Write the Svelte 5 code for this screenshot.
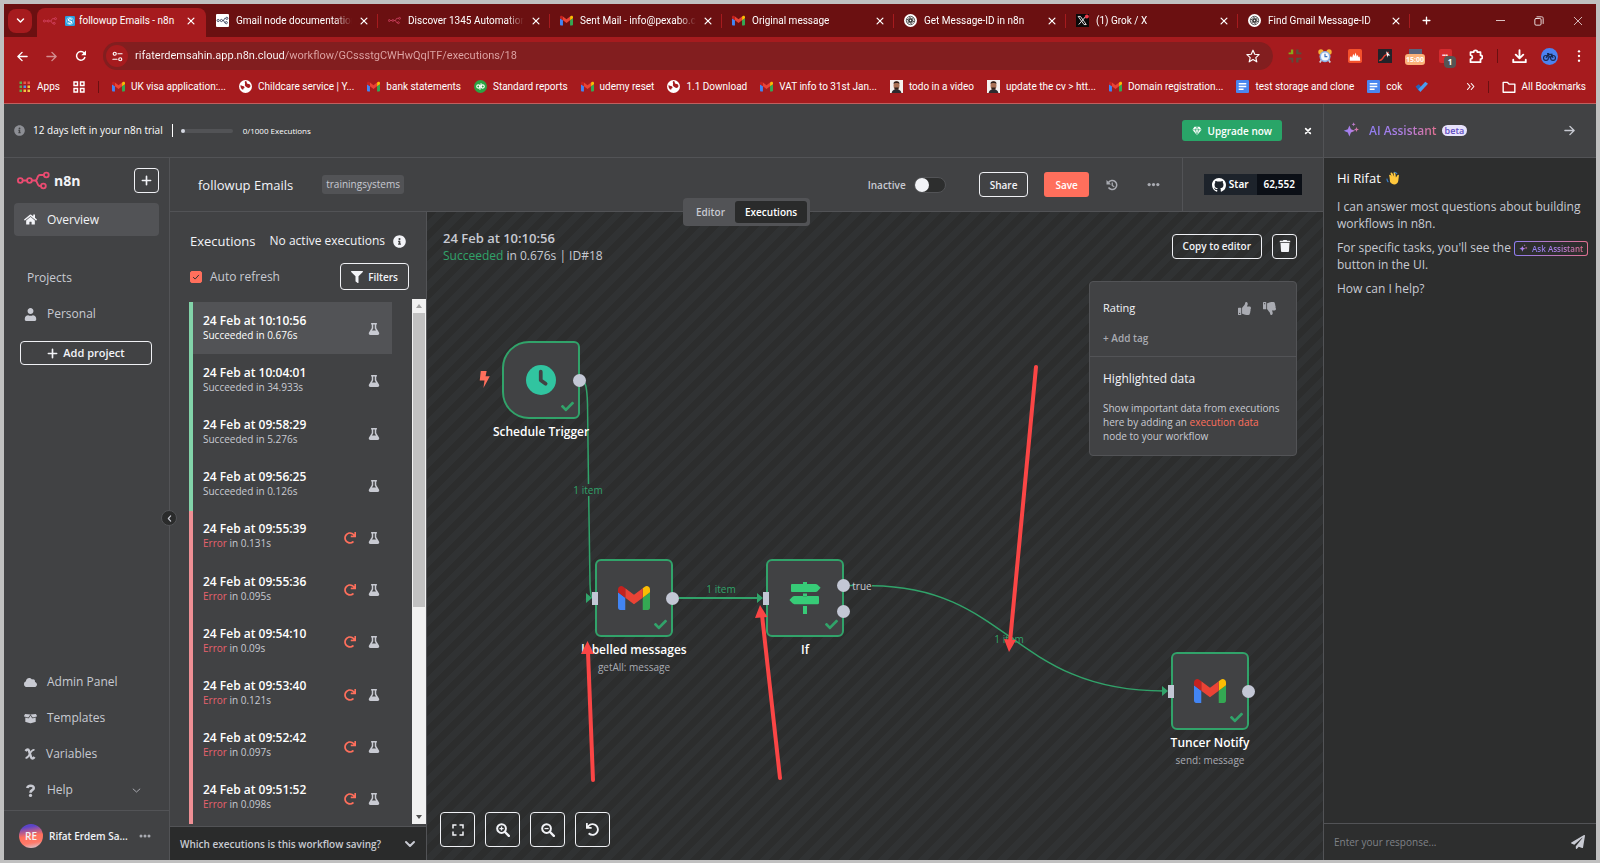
<script>
  const gmail =
    '<path fill="#4285f4" d="M58 108h14V74L52 59v43c0 3.3 2.7 6 6 6"/><path fill="#34a853" d="M120 108h14c3.3 0 6-2.7 6-6V59l-20 15"/><path fill="#fbbc04" d="M120 48v26l20-15v-8c0-7.4-8.5-11.6-14.4-7.2"/><path fill="#ea4335" d="M72 74V48l24 18 24-18v26L96 92"/><path fill="#c5221f" d="M52 51v8l20 15V48l-5.6-4.2c-5.9-4.4-14.4-.2-14.4 7.2"/>';
  const n8nMark =
    '<g fill="none" stroke="currentColor" stroke-width="5"><circle cx="9" cy="28" r="6.5"/><circle cx="34" cy="28" r="6.5"/><circle cx="80" cy="13" r="6.5"/><circle cx="72" cy="43" r="6.5"/><path d="M15.500 28h12M40.500 28h9c8 0 4-15 13-15h11M49 28c8 0 5 15 13 15h4"/></g>';
  const redo =
    '<path fill="currentColor" d="M500.330 0h-47.410a12 12 0 0 0-12 12.570l4 82.760A247.420 247.420 0 0 0 256 8C119.340 8 7.900 119.530 8 256.190 8.100 393.070 119.100 504 256 504a247.100 247.100 0 0 0 166.180-63.910 12 12 0 0 0 .480-17.430l-34-34a12 12 0 0 0-16.380-.550A176 176 0 1 1 402.100 157.800l-101.530-4.870a12 12 0 0 0-12.570 12v47.410a12 12 0 0 0 12 12h200.330a12 12 0 0 0 12-12V12a12 12 0 0 0-12-12z"/>';
  const thumb =
    '<path fill="currentColor" fill-rule="evenodd" d="M104 224H24c-13 0-24 11-24 24v240c0 13 11 24 24 24h80c13 0 24-11 24-24V248c0-13-11-24-24-24zM64 472c-13 0-24-11-24-24s11-24 24-24 24 11 24 24-11 24-24 24zM384 81c0 43-26 67-33 95h101c34 0 60 28 60 58 0 18-8 37-20 49 10 24 8 57-9 80 8 26 0 58-17 75 5 17 3 32-6 44-20 30-70 30-113 30h-3c-48 0-88-18-120-32-16-7-37-16-52-16-7 0-12-5-12-12V238c0-3 1-6 4-8 39-39 56-81 89-113 15-15 20-38 25-59C283 39 292 0 312 0c24 0 72 8 72 81z"/>';
  const sparkle =
    '<path fill="url(#ai)" d="M9 5l2.200 5.300L17 12.500l-5.800 2.200L9 20.500l-2.200-5.800L1 12.500l5.800-2.200zM19 7l1 2.500 2.500 1-2.500 1-1 2.500-1-2.500-2.500-1 2.500-1zM15 .500l.800 2 2 .800-2 .800-.800 2-.800-2-2-.800 2-.800z"/>';
  const stroke = (w, body) =>
    `<g fill="none" stroke="currentColor" stroke-width="${w}" stroke-linecap="round" stroke-linejoin="round">${body}</g>`;
  const petal = [0, 60, 120, 180, 240, 300].map((a) => `<path d="M9.400 5.500l5 2.900v5.400" transform="rotate(${a} 12 12)"/>`).join('');
  const spiral =
    `<circle cx="12" cy="12" r="12" fill="#fff"/><g fill="none" stroke="#222" stroke-width="1.300"><circle cx="12" cy="12" r="2.600"/>${petal}<circle cx="12" cy="12" r="7.800"/></g>`;
  const dots = (vertical) =>
    [4, 12, 20].map((p) => (vertical ? `<circle cx="12" cy="${p}" r="2" fill="currentColor"/>` : `<circle cx="${p}" cy="12" r="3" fill="currentColor"/>`)).join('');

  const icons = {
    gmail: ['52 42 88 66', gmail],
    n8n: ['0 0 90 56', n8nMark],
    n8nTile: ['0 0 24 24', '<rect width="24" height="24" rx="2" fill="#fff"/><g fill="none" stroke="#333a55" stroke-width="1.600"><circle cx="4" cy="12" r="2"/><circle cx="10" cy="12" r="2"/><circle cx="20" cy="8" r="2"/><circle cx="19" cy="16" r="2"/><path d="M12 12h2l2-4h2M14 12l2 4h1"/></g>'],
    sync: ['0 0 24 24', '<rect width="24" height="24" rx="3" fill="#2a9fe0"/><path d="M16.500 8.500C14 5 7.500 6.500 8 10c.500 3 7.500 1.500 8 4.500.400 3-6 4.500-8.500 1.500" fill="none" stroke="#fff" stroke-width="2.600"/><circle cx="12" cy="12" r="8.500" fill="none" stroke="#fff" stroke-width="1.200"/>'],
    gpt: ['0 0 24 24', spiral],
    x: ['0 0 24 24', '<rect width="24" height="24" fill="#090909"/><path d="M4 4.500h4.200L19 19.500h-4.200zM18 4.500L5 19.500" fill="none" stroke="#eee" stroke-width="1.700"/><circle cx="20" cy="4.500" r="3.600" fill="#f23b4c"/>'],
    close: ['0 0 24 24', stroke(3, '<path d="M5 5l14 14M19 5L5 19"/>')],
    dismiss: ['0 0 24 24', stroke(5, '<path d="M5 5l14 14M19 5L5 19"/>')],
    thinClose: ['0 0 24 24', stroke(1.7, '<path d="M3 3l18 18M21 3L3 21"/>')],
    plus: ['0 0 24 24', stroke(3.6, '<path d="M12 3v18M3 12h18"/>')],
    down: ['0 0 24 24', stroke(4, '<path d="M4 8l8 8 8-8"/>')],
    downThin: ['0 0 24 24', stroke(2, '<path d="M3 8l9 8 9-8"/>')],
    left: ['0 0 24 24', stroke(4, '<path d="M16 3l-8 9 8 9"/>')],
    min: ['0 0 24 24', stroke(2, '<path d="M1 12h22"/>')],
    restore: ['0 0 24 24', stroke(2, '<rect x="2" y="6" width="15" height="16" rx="3"/><path d="M7 2h11c3 0 4 1 4 4v12"/>')],
    back: ['0 0 24 24', stroke(3, '<path d="M22 12H3M11 3l-9 9 9 9"/>')],
    forward: ['0 0 24 24', stroke(3, '<path d="M2 12h19M13 3l9 9-9 9"/>')],
    reload: ['0 0 24 24', '<path d="M20 14a8.600 8.600 0 1 1-1.500-7.500" fill="none" stroke="currentColor" stroke-width="3"/><path d="M22 1v9.500h-9.500z" fill="currentColor"/>'],
    tune: ['0 0 24 24', stroke(2.6, '<circle cx="6" cy="6" r="3.300"/><path d="M13 6h9M2 18h9"/><circle cx="18" cy="18" r="3.300"/>')],
    star: ['0 0 24 24', '<path d="M12 2l3 7 7.500.700-5.700 5 1.700 7.300-6.500-3.900L5.500 22l1.700-7.300-5.700-5L9 9z" fill="none" stroke="currentColor" stroke-width="2" stroke-linejoin="round"/>'],
    cross: ['0 0 24 24', '<path fill="#86a81a" d="M5 1h4v8H1V6h4z"/><path fill="#5a4d3c" d="M14 1h4v5h5v3h-9zM1 15h8v8H6v-5H1zM14 15h9v3h-5v5h-4z"/>'],
    alarm: ['0 0 24 24', '<circle cx="5" cy="5" r="4.500" fill="#f5b335"/><circle cx="19" cy="5" r="4.500" fill="#f5b335"/><path d="M6 19l-3 4M18 19l3 4" stroke="#cfd5de" stroke-width="3"/><circle cx="12" cy="13" r="9.500" fill="#8db4e8"/><circle cx="12" cy="13" r="6.800" fill="#f6f9fc"/><path d="M12 8v5h4" fill="none" stroke="#3b6fc0" stroke-width="2"/>'],
    fire: ['0 0 24 24', '<rect width="24" height="24" rx="3" fill="#f4512c"/><path d="M3 20v-5l2-3 2 3 2-7 2 4 2-6 2 7 2-3 1 4 2-1 1 7z" fill="#fff"/>'],
    chartTile: ['0 0 24 24', '<rect width="24" height="24" rx="1" fill="#222329"/><path d="M2 20c6 0 7-7 10-9 3-1 3-2 6-6" fill="none" stroke="#e54232" stroke-width="2.400"/><path d="M14 4l7 7h-4l-1 4z" fill="#fff"/>'],
    puzzle: ['0 0 24 24', stroke(2.8, '<path d="M4 5h5c0-4 6-4 6 0h5v5c4 0 4 6 0 6v5H4v-5c4-.500 4-5.500 0-6z"/>')],
    download: ['0 0 24 24', stroke(3, '<path d="M12 2v12M6 9l6 6 6-6M2 17v4h20v-4"/>')],
    bike: ['0 0 24 24', '<circle cx="12" cy="12" r="12" fill="#4c82f0"/><g fill="none" stroke="#17284f" stroke-width="1.600"><circle cx="7" cy="14" r="3.400"/><circle cx="17" cy="14" r="3.400"/><path d="M7 14l3-5h5l2 5M10 9l3 5 3-6M8.500 8h3"/></g>'],
    kebab: ['0 0 24 24', dots(true)],
    ellipsis: ['0 0 24 24', dots(false)],
    apps: ['0 0 24 24', '<path fill="#5cae4a" d="M1 1h5v5H1zM1 9h5v5H1z"/><path fill="#e8584a" d="M9 1h5v5H9zM17 1h5v5h-5z"/><path fill="#5b8def" d="M9 9h5v5H9z"/><path fill="#f4c542" d="M17 9h5v5h-5zM17 17h5v5h-5zM9 17h5v5H9z"/><path fill="#5cae4a" d="M1 17h5v5H1z"/>'],
    grid: ['0 0 24 24', '<g fill="none" stroke="currentColor" stroke-width="2.800"><path d="M2 2h7v7H2zM15 2h7v7h-7zM2 15h7v7H2zM15 15h7v7h-7z"/></g>'],
    globe: ['0 0 24 24', '<circle cx="12" cy="12" r="12" fill="#fff"/><path d="M3 9c3 3 6 1 7 4s-3 2-2 5c-4-1-6-5-5-9zM12 2c4 1 1 4 4 5s4 0 5 3-3 6-6 4-5-3-4-6-2-4 1-6z" fill="#a61b1e"/>'],
    qb: ['0 0 24 24', '<circle cx="12" cy="12" r="12" fill="#2ca343"/><g fill="none" stroke="#fff" stroke-width="2"><circle cx="8" cy="12" r="3"/><path d="M11 9v9"/><circle cx="16" cy="12" r="3"/><path d="M13 6v9"/></g>'],
    face: ['0 0 24 24', '<rect width="24" height="24" fill="#f4f1ee"/><path d="M3 24c1-6 6-7 9-7s8 1 9 7z" fill="#2c2a2e"/><ellipse cx="12" cy="10" rx="5.500" ry="7.500" fill="#a87255"/><path d="M6.500 7c0-6 11-6 11 0-2-2-9-2-11 0zM8 14h8l-1 4H9z" fill="#2f211b"/>'],
    doc: ['0 0 24 24', '<rect width="24" height="24" rx="2" fill="#4a86ef"/><path d="M5 7h14M5 12h14M5 17h9" stroke="#fff" stroke-width="2.600"/>'],
    tick: ['0 0 24 24', '<path d="M1 12l6-4 4 4-3 9z" fill="#2463b8"/><path d="M6 17L19 3l5 4L10 22z" fill="#4a9df0"/>'],
    more: ['0 0 24 24', stroke(3, '<path d="M4 4l7 8-7 8M14 4l7 8-7 8"/>')],
    folder: ['0 0 24 24', stroke(2.4, '<path d="M2 4h7l3 3h10v14H2z"/>')],
    info: ['0 0 512 512', '<path fill="currentColor" d="M256 8C119 8 8 119 8 256s111 248 248 248 248-111 248-248S393 8 256 8zm0 110a42 42 0 1 1 0 84 42 42 0 0 1 0-84zm56 254c0 7-5 12-12 12h-88c-7 0-12-5-12-12v-24c0-7 5-12 12-12h12v-64h-12c-7 0-12-5-12-12v-24c0-7 5-12 12-12h64c7 0 12 5 12 12v100h12c7 0 12 5 12 12v24z"/>'],
    home: ['0 0 576 512', '<path fill="currentColor" d="M280.370 148.260L96 300.110V464a16 16 0 0 0 16 16l112.060-.290a16 16 0 0 0 15.920-16V368a16 16 0 0 1 16-16h64a16 16 0 0 1 16 16v95.640a16 16 0 0 0 16 16.050L464 480a16 16 0 0 0 16-16V300L295.670 148.260a12.190 12.190 0 0 0-15.300 0zM571.600 251.470L488 182.560V44.050a12 12 0 0 0-12-12h-56a12 12 0 0 0-12 12v72.610L318.470 43a48 48 0 0 0-61 0L4.340 251.470a12 12 0 0 0-1.600 16.900l25.500 31A12 12 0 0 0 45.150 301l235.220-193.740a12.190 12.190 0 0 1 15.300 0L530.900 301a12 12 0 0 0 16.900-1.600l25.500-31a12 12 0 0 0-1.700-16.930z"/>'],
    user: ['0 0 448 512', '<path fill="currentColor" d="M224 240c66 0 116-54 116-120S290 0 224 0 108 54 108 120s50 120 116 120zm90 42c-28 14-56 20-90 20s-62-6-90-20C60 282 0 342 0 416v48c0 27 22 48 48 48h352c27 0 48-21 48-48v-48c0-74-60-134-134-134z"/>'],
    cloud: ['0 0 640 512', '<path fill="currentColor" d="M537.600 226.600c4.100-10.700 6.400-22.400 6.400-34.600 0-53-43-96-96-96-19.700 0-38.100 6-53.300 16.200C367 64.200 315.300 32 256 32c-88.400 0-160 71.600-160 160 0 2.700.100 5.400.200 8.100C40.200 219.800 0 273.200 0 336c0 79.500 64.500 144 144 144h368c70.700 0 128-57.300 128-128 0-61.900-44-113.600-102.400-125.400z"/>'],
    box: ['0 0 640 512', '<path fill="currentColor" d="M53 32L0 132c-5 9 0 20 10 23l187 53c10 3 20-1 25-10L320 64zM587 32l53 100c5 9 0 20-10 23l-187 53c-10 3-20-1-25-10L320 64zM64 205v197c0 15 10 27 24 31l216 54c10 2 21 2 31 0l217-54c14-4 24-16 24-31V205l-130 37c-24 7-49-3-61-24l-65-108-64 108c-12 21-38 31-61 24z"/>'],
    variable: ['0 0 24 24', '<path d="M3 6c3-4 6-4 7 0l4 12c1 4 4 4 7 0" fill="none" stroke="currentColor" stroke-width="5"/><path d="M21 4c-5-1-8 5-10 9s-4 7-8 7" fill="none" stroke="currentColor" stroke-width="3.400"/>'],
    help: ['0 0 24 24', '<path d="M6 7.500C7 2 18 1.500 18 7.500c0 4.500-6 3.500-6 8.500" fill="none" stroke="currentColor" stroke-width="4.800"/><circle cx="12" cy="21" r="3" fill="currentColor"/>'],
    filter: ['0 0 512 512', '<path fill="currentColor" d="M488 0H24C3 0-8 26 7 41l185 185v206c0 8 4 15 10 20l80 56c16 11 38 0 38-20V226L505 41c15-15 4-41-17-41z"/>'],
    flask: ['0 0 448 512', '<path fill="currentColor" fill-rule="evenodd" d="M437.200 403.500L320 215V64h8c13.300 0 24-10.700 24-24V24c0-13.300-10.700-24-24-24H120c-13.300 0-24 10.700-24 24v16c0 13.300 10.700 24 24 24h8v151L10.800 403.500C-18.500 450.600 15.300 512 70.900 512h306.200c55.700 0 89.400-61.500 60.100-108.500zM137.900 320l48.200-77.600c3.700-5.200 5.800-11.600 5.800-18.400V64h64v160c0 6.900 2.200 13.200 5.800 18.400l48.200 77.600h-172z"/>'],
    redo: ['0 0 512 512', redo],
    undo: ['0 0 512 512', `<g transform="matrix(-1 0 0 1 512 0)">${redo}</g>`],
    history: ['0 0 24 24', '<path d="M5 7a9 9 0 1 1 0 10" fill="none" stroke="currentColor" stroke-width="3"/><path d="M1 2v9h9z" fill="currentColor"/><path d="M12.500 7v6l4 2.500" fill="none" stroke="currentColor" stroke-width="2.600"/>'],
    gem: ['0 0 24 24', '<path d="M6 2h12l5 7-11 13L1 9z" fill="currentColor"/><path d="M1 9h22M8 9l4 12 4-12-4-7z" fill="none" stroke="#29a568" stroke-width="1.500"/>'],
    github: ['0 0 16 16', '<path fill="currentColor" d="M8 0C3.580 0 0 3.580 0 8c0 3.540 2.290 6.530 5.470 7.590.400.070.550-.170.550-.380 0-.190-.010-.820-.010-1.490-2.010.370-2.530-.490-2.690-.940-.090-.230-.480-.940-.820-1.130-.280-.150-.680-.520-.010-.530.630-.010 1.080.580 1.230.820.720 1.210 1.870.870 2.330.660.070-.520.280-.870.510-1.070-1.780-.200-3.640-.890-3.640-3.950 0-.870.310-1.590.820-2.150-.080-.200-.360-1.020.080-2.120 0 0 .670-.210 2.200.820.640-.180 1.320-.270 2-.270s1.360.090 2 .270c1.530-1.040 2.200-.820 2.200-.820.440 1.100.160 1.920.080 2.120.510.560.820 1.270.820 2.150 0 3.070-1.870 3.750-3.650 3.950.290.250.540.730.540 1.480 0 1.070-.010 1.930-.010 2.200 0 .210.150.460.550.380A8.010 8.010 0 0 0 16 8c0-4.420-3.580-8-8-8z"/>'],
    trash: ['0 0 448 512', '<path fill="currentColor" d="M432 32H312l-10-19c-4-8-12-13-21-13H167c-9 0-17 5-21 13l-10 19H16C7 32 0 39 0 48v48h448V48c0-9-7-16-16-16zM32 128l21 339c2 25 23 45 48 45h246c25 0 46-20 48-45l21-339z"/>'],
    up: ['0 0 512 512', thumb],
    dislike: ['0 0 512 512', `<g transform="matrix(1 0 0 -1 0 512)">${thumb}</g>`],
    plane: ['0 0 512 512', '<path fill="currentColor" d="M476 3L12 271c-18 10-15 35 3 43l106 44 287-253c6-5 14 3 9 9L176 407v80c0 24 28 33 42 16l64-77 125 52c14 6 30-3 33-18L512 28c3-20-19-35-36-25z"/>'],
    sparkle: ['0 0 24 24', sparkle],
    fit: ['0 0 24 24', '<path d="M2 9V2h7M15 2h7v7M22 15v7h-7M9 22H2v-7" fill="none" stroke="currentColor" stroke-width="3"/>'],
    zoomIn: ['0 0 24 24', '<circle cx="9.500" cy="9.500" r="7.500" fill="none" stroke="currentColor" stroke-width="3.400"/><path d="M15 15l7 7" stroke="currentColor" stroke-width="4" stroke-linecap="round"/><path d="M9.500 6v7M6 9.500h7" stroke="currentColor" stroke-width="2.200"/>'],
    zoomOut: ['0 0 24 24', '<circle cx="9.500" cy="9.500" r="7.500" fill="none" stroke="currentColor" stroke-width="3.400"/><path d="M15 15l7 7" stroke="currentColor" stroke-width="4" stroke-linecap="round"/><path d="M6 9.500h7" stroke="currentColor" stroke-width="2.200"/>'],
    clock: ['0 0 24 24', '<circle cx="12" cy="12" r="12" fill="#31c4a0"/><path d="M11.800 5.300v6.900l3.900 2.800" fill="none" stroke="#414244" stroke-width="3" stroke-linecap="round" stroke-linejoin="round"/>'],
    signs: ['0 0 24 24', '<g fill="#37cb77"><path d="M10.500 0h3v2h-3zM2.500 1.500H20c.600 0 1 .200 1.400.600l2.300 2.300-2.300 2.500c-.400.400-.800.600-1.400.600H2.500c-.700 0-1-.400-1-1V2.500c0-.600.300-1 1-1zM10.500 8.700h3v2h-3zM21.500 10.500H4c-.600 0-1 .200-1.400.600L.300 13.500l2.300 2.500c.400.400.800.600 1.400.600h17.500c.700 0 1-.400 1-1v-4.100c0-.600-.300-1-1-1zM10.500 18h3v6h-3z"/></g>'],
    check: ['0 0 512 512', '<path fill="currentColor" d="M174 439L7 273c-10-10-10-26 0-36l37-36c10-10 26-10 36 0l112 112L432 73c10-10 26-10 36 0l37 36c10 10 10 26 0 36L210 439c-10 10-26 10-36 0z"/>'],
    bolt: ['0 0 20 32', '<path fill="currentColor" d="M3 0h11l-2 10h8L8 32l2-14H1z"/>'],
    wave: ['0 0 24 24', '<path d="M6 10c-2-4 1-5 3-2l1 2-2-5c-1-3 2-3 3-1l3 6-1-6c0-3 2-3 3 0l1 7 2-3c1-2 4-2 3 1l-1 8c-1 7-10 8-14 2z" fill="#ffc83d"/><path d="M14 2c3 0 4 1 5 3M2 13c-1 3 0 4 2 6" fill="none" stroke="#3a86d6" stroke-width="1.800"/>'],
  };

  const tabs = [
    { icon: 'n8nTile', title: 'Gmail node documentation' },
    { icon: 'n8n', title: 'Discover 1345 Automation', tint: true },
    { icon: 'gmail', title: 'Sent Mail - info@pexabo.c' },
    { icon: 'gmail', title: 'Original message' },
    { icon: 'gpt', title: 'Get Message-ID in n8n' },
    { icon: 'x', title: '(1) Grok / X' },
    { icon: 'gpt', title: 'Find Gmail Message-ID' },
  ];
  const bookmarks = [
    ['gmail', 'UK visa application:...'],
    ['globe', 'Childcare service | Y...'],
    ['gmail', 'bank statements'],
    ['qb', 'Standard reports'],
    ['gmail', 'udemy reset'],
    ['globe', '1.1 Download'],
    ['gmail', 'VAT info to 31st Jan...'],
    ['face', 'todo in a video'],
    ['face', 'update the cv > htt...'],
    ['gmail', 'Domain registration...'],
    ['doc', 'test storage and clone'],
    ['doc', 'cok'],
    ['tick', ''],
  ];
  const runs = [
    ['10:10:56', '0.676s', true],
    ['10:04:01', '34.933s', true],
    ['09:58:29', '5.276s', true],
    ['09:56:25', '0.126s', true],
    ['09:55:39', '0.131s', false],
    ['09:55:36', '0.095s', false],
    ['09:54:10', '0.09s', false],
    ['09:53:40', '0.121s', false],
    ['09:52:42', '0.097s', false],
    ['09:51:52', '0.098s', false],
  ];
  const nodes = [
    { x: 75, y: 129, name: 'Schedule Trigger', icon: 'clock', size: 30, trigger: true },
    { x: 168, y: 347, name: 'labelled messages', sub: 'getAll: message', icon: 'gmail', size: 32 },
    { x: 339, y: 347, name: 'If', icon: 'signs', size: 32 },
    { x: 744, y: 440, name: 'Tuncer Notify', sub: 'send: message', icon: 'gmail', size: 32 },
  ];
  let auto = $state(true);
  let active = $state(false);
  let reply = $state('');
  let address = $state('rifaterdemsahin.app.n8n.cloud/workflow/GCssstgCWHwQqITF/executions/18');
</script>

{#snippet icon(name, size = 12)}
  <svg class="icon" viewBox={icons[name][0]} width={size} height={size} aria-hidden="true">{@html icons[name][1]}</svg>
{/snippet}

<svg class="defs" width="0" height="0" aria-hidden="true">
  <linearGradient id="ai" x1="0" x2="1"><stop offset="0" stop-color="#8f7df0" /><stop offset="0.5" stop-color="#b180e8" /><stop offset="1" stop-color="#e0708f" /></linearGradient>
</svg>

<div class="window">
  <header class="browser">
    <div class="strip">
      <button class="tabsearch" aria-label="Search tabs">{@render icon('down', 9)}</button>
      <div class="tab current">
        <span class="tint">{@render icon('n8n', 14)}</span>
        <span class="lead">{@render icon('sync', 10)}</span>
        <span class="tabtitle">followup Emails - n8n</span>
        <button class="bare" aria-label="Close tab">{@render icon('close', 10)}</button>
      </div>
      {#each tabs as t}
        <div class="tab">
          <span class:tint={t.tint}>{@render icon(t.icon, 13)}</span>
          <span class="tabtitle">{t.title}</span>
          <button class="bare" aria-label="Close tab">{@render icon('close', 10)}</button>
        </div>
      {/each}
      <button class="bare newtab" aria-label="New tab">{@render icon('plus', 9)}</button>
      <div class="winctl">
        <button class="bare" aria-label="Minimise">{@render icon('min', 9)}</button>
        <button class="bare" aria-label="Restore">{@render icon('restore', 10)}</button>
        <button class="bare" aria-label="Close window">{@render icon('thinClose', 10)}</button>
      </div>
    </div>
    <div class="toolbar">
      <nav class="navbtns">
        <button class="bare" aria-label="Back">{@render icon('back', 11)}</button>
        <button class="bare faded" aria-label="Forward">{@render icon('forward', 11)}</button>
        <button class="bare" aria-label="Reload">{@render icon('reload', 12)}</button>
      </nav>
      <div class="address">
        <button class="tune" aria-label="Site information">{@render icon('tune', 11)}</button>
        <input aria-label="Address" bind:value={address} />
        <button class="bare" aria-label="Bookmark">{@render icon('star', 14)}</button>
      </div>
      <div class="exts">
        <button class="bare" aria-label="Extension">{@render icon('cross', 14)}</button>
        <button class="bare" aria-label="Alarm">{@render icon('alarm', 14)}</button>
        <button class="bare" aria-label="Hotjar">{@render icon('fire', 14)}</button>
        <button class="bare" aria-label="Draw">{@render icon('chartTile', 14)}</button>
        <button class="bare timer"><i></i><span>15:00</span></button>
        <button class="bare pass"><i>•••</i><span>1</span></button>
        <button class="bare" aria-label="Extensions">{@render icon('puzzle', 15)}</button>
      </div>
      <div class="account">
        <button class="bare" aria-label="Downloads">{@render icon('download', 15)}</button>
        <button class="bare" aria-label="Profile">{@render icon('bike', 17)}</button>
        <button class="bare" aria-label="Menu">{@render icon('kebab', 14)}</button>
      </div>
    </div>
    <nav class="bookmarks">
      <button class="bm">{@render icon('apps', 12)}Apps</button>
      <button class="bm" aria-label="Tab groups">{@render icon('grid', 12)}</button>
      <span class="rule"></span>
      <div class="bmlist">
        {#each bookmarks as [ic, label]}
          <button class="bm" aria-label={label || 'To do'}>{@render icon(ic, 13)}{label}</button>
        {/each}
      </div>
      <button class="bare" aria-label="More bookmarks">{@render icon('more', 9)}</button>
      <span class="rule"></span>
      <button class="bm">{@render icon('folder', 14)}All Bookmarks</button>
    </nav>
  </header>

  <div class="app">
    <section class="work">
      <div class="banner">
        <span class="muted">{@render icon('info', 11)}</span>
        <span class="trial">12 days left in your n8n trial</span>
        <span class="meter"><i></i></span>
        <small>0/1000 Executions</small>
        <button class="upgrade">{@render icon('gem', 10)}Upgrade now</button>
        <button class="bare" aria-label="Dismiss">{@render icon('dismiss', 8)}</button>
      </div>
      <div class="body">
        <aside class="side">
          <div class="brand">
            <span class="mark">{@render icon('n8n', 33)}</span><b>n8n</b>
            <button class="outline square" aria-label="Create">{@render icon('plus', 11)}</button>
          </div>
          <a class="item on" href="#overview">{@render icon('home', 13)}Overview</a>
          <h3>Projects</h3>
          <a class="item" href="#personal">{@render icon('user', 13)}Personal</a>
          <button class="outline addproject">{@render icon('plus', 11)}Add project</button>
          <div class="foot">
            <a class="item" href="#admin">{@render icon('cloud', 13)}Admin Panel</a>
            <a class="item" href="#templates">{@render icon('box', 13)}Templates</a>
            <a class="item" href="#variables">{@render icon('variable', 12)}Variables</a>
            <a class="item" href="#help">{@render icon('help', 13)}Help<span class="chev">{@render icon('downThin', 9)}</span></a>
          </div>
          <div class="me">
            <span class="avatar">RE</span><span>Rifat Erdem Sa...</span>
            <button class="bare" aria-label="Account menu">{@render icon('ellipsis', 12)}</button>
          </div>
          <button class="fold" aria-label="Collapse sidebar">{@render icon('left', 7)}</button>
        </aside>

        <div class="main">
          <div class="wfhead">
            <h1>followup Emails</h1>
            <span class="tag">trainingsystems</span>
            <div class="actions">
              <label class="switch"><span>Inactive</span><input type="checkbox" bind:checked={active} /></label>
              <button class="outline">Share</button>
              <button class="save">Save</button>
              <button class="bare hist" aria-label="History">{@render icon('history', 12)}</button>
              <button class="bare" aria-label="Options">{@render icon('ellipsis', 13)}</button>
            </div>
            <div class="gh"><a href="#star">{@render icon('github', 14)}Star</a><a class="count" href="#gazers">62,552</a></div>
            <div class="switcher"><button>Editor</button><button class="sel">Executions</button></div>
          </div>

          <div class="split">
            <section class="runs">
              <div class="rhead"><h2>Executions</h2><span>No active executions</span>{@render icon('info', 13)}</div>
              <div class="rtools">
                <label><input type="checkbox" bind:checked={auto} />Auto refresh</label>
                <button class="outline">{@render icon('filter', 12)}Filters</button>
              </div>
              <div class="scroller">
                <ul>
                  {#each runs as [time, took, ok], i}
                    <li class:bad={!ok} class:chosen={i === 0}>
                      <a href="#run{i}">
                        <span class="rtext"><b>24 Feb at {time}</b><small>{#if ok}Succeeded in {took}{:else}<em>Error</em> in {took}{/if}</small></span>
                        {#if !ok}<span class="retry">{@render icon('redo', 12)}</span>{/if}
                        {@render icon('flask', 12)}
                      </a>
                    </li>
                  {/each}
                </ul>
                <div class="bar" aria-hidden="true"><i class="upar"></i><span></span><i class="dnar"></i></div>
              </div>
              <button class="saving">Which executions is this workflow saving?{@render icon('down', 12)}</button>
            </section>

            <section class="canvas">
              <svg class="edges" width="896" height="648" aria-hidden="true">
                <g fill="none" stroke="#31a36a" stroke-width="1.500">
                  <path d="M153 168c6 0 7 8 7.500 24L161.500 272M161.700 284L163 372q.300 10 2 14" />
                  <path d="M252 386H334" stroke-width="2" />
                  <path d="M423 373.500h4M445 373.800C582 375 586 479 737 479" />
                </g>
                <path d="M159 381l6 5-6 5zM330 381l6 5-6 5zM735 474l6 5-6 5z" fill="#31a36a" />
              </svg>
              <div class="dhead">
                <div><h2>24 Feb at 10:10:56</h2><p><em>Succeeded</em> in 0.676s | ID#18</p></div>
                <button class="outline">Copy to editor</button>
                <button class="outline square" aria-label="Delete">{@render icon('trash', 12)}</button>
              </div>

              {#each nodes as n}
                <div class="node" style="left:{n.x}px;top:{n.y}px">
                  <div class="tile" class:trigger={n.trigger}>
                    {@render icon(n.icon, n.size)}
                    <span class="ok">{@render icon('check', 13)}</span>
                    {#if n.trigger}<span class="bolt">{@render icon('bolt', 17)}</span>{:else}<i class="in"></i>{/if}
                    <span class="outs"><i></i>{#if n.name === 'If'}<i></i>{/if}</span>
                  </div>
                  <strong>{n.name}</strong>
                  {#if n.sub}<small>{n.sub}</small>{/if}
                </div>
              {/each}
              <span class="count1" style="left:161px;top:278px">1 item</span>
              <span class="count1" style="left:294px;top:377px">1 item</span>
              <span class="count1" style="left:582px;top:427px">1 item</span>
              <span class="count1 true" style="left:435px;top:374px">true</span>

              <svg class="edges notes" width="896" height="648" aria-hidden="true">
                <g stroke="#fa4545" stroke-width="4" stroke-linecap="round">
                  <path d="M166 568L161 440M353 566L335 403M609 155L583 430" />
                </g>
                <path d="M160.500 429l6.500 13h-13zM333 393l7.500 12-12.500 1zM582 440l-5-13 12 1z" fill="#fa4545" />
              </svg>

              <aside class="rating">
                <div class="rate">
                  <div class="rrow"><span>Rating</span><button class="bare" aria-label="Good">{@render icon('up', 13)}</button><button class="bare" aria-label="Bad">{@render icon('dislike', 13)}</button></div>
                  <button class="bare addtag">+ Add tag</button>
                </div>
                <div class="hl">
                  <h3>Highlighted data</h3>
                  <p>Show important data from executions here by adding an <a href="#data">execution data</a> node to your workflow</p>
                </div>
              </aside>

              <div class="zoomers">
                <button class="outline" aria-label="Fit">{@render icon('fit', 12)}</button>
                <button class="outline" aria-label="Zoom in">{@render icon('zoomIn', 14)}</button>
                <button class="outline" aria-label="Zoom out">{@render icon('zoomOut', 14)}</button>
                <button class="outline" aria-label="Reset zoom">{@render icon('undo', 13)}</button>
              </div>
            </section>
          </div>
        </div>
      </div>
    </section>

    <aside class="assist">
      <div class="ahead">
        {@render icon('sparkle', 17)}<b>AI Assistant</b><span class="beta">beta</span>
        <button class="bare" aria-label="Close assistant">{@render icon('forward', 11)}</button>
      </div>
      <div class="chat">
        <h2>Hi Rifat {@render icon('wave', 14)}</h2>
        <p>I can answer most questions about building workflows in n8n.</p>
        <p>For specific tasks, you'll see the <span class="ask">{@render icon('sparkle', 9)}<b>Ask Assistant</b></span> button in the UI.</p>
        <p>How can I help?</p>
      </div>
      <div class="compose">
        <input aria-label="Message" placeholder="Enter your response..." bind:value={reply} />
        <button class="bare" aria-label="Send">{@render icon('plane', 14)}</button>
      </div>
    </aside>
  </div>
</div>

<style>
  :global(body) { margin: 0; background: #c0c0c0; }
  :global(*) { box-sizing: border-box; }
  .window { height: 100vh; padding: 4px 4px 3px; display: flex; flex-direction: column; font: 12px/16px "Open Sans", sans-serif; color: #c8cad2; background: #c0c0c0; }
  .defs { position: absolute; }
  .icon { display: block; flex: none; }
  button, input { font: inherit; color: inherit; margin: 0; }
  button { cursor: pointer; }
  a { color: inherit; text-decoration: none; }
  h1, h2, h3, p, ul { margin: 0; padding: 0; font-weight: 400; }
  .bare { background: none; border: 0; padding: 0; display: flex; align-items: center; justify-content: center; flex: none; }

  .browser { background: #a61b1e; color: #fff; font-family: Roboto, sans-serif; border-bottom: 1px solid #c0605f; }
  .strip { height: 33px; background: #6b1011; display: flex; align-items: center; padding: 0 13px 0 4px; font-size: 10px; }
  .tabsearch { width: 24px; height: 24px; border: 0; border-radius: 8px; background: #a61b1e; display: grid; place-items: center; padding: 0; margin-right: 5px; flex: none; }
  .tab { display: flex; align-items: center; gap: 7px; flex: 0 1 172px; min-width: 0; height: 14px; padding: 0 8px 0 10px; border-right: 1px solid #a61b1e; }
  .tab.current { flex-basis: 169px; height: 29px; background: #a61b1e; border-radius: 8px 8px 0 0; align-self: flex-end; padding: 0 10px 4px 6px; border: 0; gap: 4px; }
  .tabtitle { flex: 1; overflow: hidden; white-space: nowrap; mask-image: linear-gradient(90deg, #000 85%, transparent); }
  .tab.current .tabtitle { mask-image: none; }
  .lead { margin-left: 4px; }
  .tint { color: #d9486a; }
  .newtab { margin-left: 12px; }
  .winctl { margin-left: auto; display: flex; gap: 29px; }
  .toolbar { display: flex; align-items: center; height: 38px; padding: 0 10px 0 13px; }
  .navbtns { display: flex; gap: 18px; width: 86px; }
  .faded { opacity: .5; }
  .address { flex: 1; height: 28px; border-radius: 14px; background: #821e1f; display: flex; align-items: center; padding: 0 13px 0 3px; gap: 7px; }
  .tune { width: 22px; height: 22px; border-radius: 11px; border: 0; background: #a61b1e; display: grid; place-items: center; padding: 0; }
  .address input { flex: 1; border: 0; outline: 0; padding: 0; font-size: 11px; color: transparent; background: linear-gradient(90deg, #fff 150px, #e0a8a8 150px); background-clip: text; -webkit-background-clip: text; }
  .exts { display: flex; gap: 16px; padding: 0 14px 0 15px; align-items: center; border-right: 1px solid #6b1011; height: 14px; }
  .timer, .pass { position: relative; width: 14px; height: 14px; }
  .timer i { width: 13px; height: 6px; background: #59647c; align-self: flex-start; }
  .timer span { position: absolute; top: 5px; left: -3px; background: #fbb27a; border-radius: 3px; font: 700 7px/11px "Open Sans", sans-serif; padding: 0 1px; }
  .pass i { width: 13px; height: 14px; background: #d42a2e; border-radius: 2px; font: 700 5px/12px "Open Sans", sans-serif; }
  .pass span { position: absolute; left: 6px; top: 7px; width: 12px; background: #555; border-radius: 4px; font: 700 8px/12px "Open Sans", sans-serif; }
  .account { display: flex; gap: 14px; align-items: center; padding-left: 14px; }
  .bookmarks { display: flex; align-items: center; gap: 13px; height: 28px; padding: 0 10px 5px 15px; font-size: 10px; }
  .bm { display: flex; align-items: center; gap: 6px; background: none; border: 0; padding: 0; white-space: nowrap; flex: none; }
  .bmlist { flex: 1; display: flex; gap: 13px; min-width: 0; }
  .rule { width: 1px; height: 12px; background: #6b1011; }

  .app { flex: 1; min-height: 0; display: flex; background: #414244; }
  .work { flex: 1; min-width: 0; display: flex; flex-direction: column; }
  .banner { display: flex; align-items: center; height: 54px; padding: 0 11px 0 10px; border-bottom: 1px solid #525356; color: #fff; font-size: 10px; }
  .muted { color: #8d8f95; margin-right: 8px; }
  .trial { padding-right: 9px; border-right: 1px solid #fff; line-height: 13px; }
  .meter { width: 52px; height: 4px; border-radius: 2px; background: #525356; margin: 0 10px 0 8px; }
  .meter i { display: block; width: 4px; height: 4px; border-radius: 2px; background: #d5d8e2; }
  small { font-size: 10px; }
  .banner small { font-size: 8px; }
  .upgrade { margin: 0 22px 0 auto; height: 21px; border: 0; border-radius: 3px; padding: 0 10px; background: #29a568; font-weight: 600; display: flex; align-items: center; gap: 5px; }
  .body { flex: 1; min-height: 0; display: flex; }
  .side { position: relative; width: 166px; flex: none; border-right: 1px solid #525356; display: flex; flex-direction: column; }
  .brand { display: flex; align-items: center; height: 45px; padding: 0 10px 0 13px; gap: 4px; color: #f2f3f7; }
  .brand b { font-size: 14px; }
  .mark { color: #ea4b71; }
  .brand .outline { margin-left: auto; }
  .outline { border: 1px solid #f0f1f5; background: none; border-radius: 4px; height: 25px; padding: 0 10px; font-size: 10px; font-weight: 600; color: #f2f3f7; display: flex; align-items: center; justify-content: center; gap: 5px; flex: none; }
  .outline.square { width: 25px; padding: 0; }
  .item { display: flex; align-items: center; gap: 10px; height: 32px; margin: 0 10px; padding: 0 10px; border-radius: 4px; color: #c8cad2; }
  .item.on { background: #525356; color: #f2f3f7; height: 33px; }
  .side h3 { font-size: 12px; margin: 34px 0 12px 23px; }
  .addproject { margin: 11px 17px 11px 16px; height: 24px; font-size: 11px; }
  .foot { margin-top: auto; display: grid; gap: 4px; padding-bottom: 4px; }
  .chev { margin-left: auto; margin-right: 8px; }
  .me { height: 50px; border-top: 1px solid #525356; display: flex; align-items: center; gap: 6px; padding: 0 18px 0 15px; font-size: 10px; font-weight: 600; color: #f2f3f7; white-space: nowrap; }
  .me .bare { margin-left: auto; color: #a9abb2; }
  .avatar { width: 24px; height: 24px; flex: none; border-radius: 50%; background: linear-gradient(170deg, #5b44c9 15%, #ff6f5c 50%, #ff7a6a 75%, #cfd1e0); text-align: center; line-height: 24px; }
  .fold { position: absolute; right: -8px; top: 352px; width: 16px; height: 16px; border: 1px solid #525356; border-radius: 50%; background: #2a2b2b; display: grid; place-items: center; padding: 0; z-index: 2; }
  .main { flex: 1; min-width: 0; display: flex; flex-direction: column; }
  .wfhead { position: relative; height: 54px; flex: none; display: flex; align-items: center; padding-left: 28px; border-bottom: 1px solid #525356; }
  .wfhead h1 { font-size: 13px; color: #f2f3f7; }
  .tag { margin-left: 29px; padding: 0 4px; line-height: 19px; border-radius: 3px; background: #525356; font-size: 10px; }
  .actions { margin-left: auto; display: flex; align-items: center; align-self: stretch; padding-right: 22px; border-right: 1px solid #525356; color: #a9abb2; }
  .switch { display: flex; align-items: center; gap: 8px; color: #c8cad2; font-size: 10px; font-weight: 600; margin-right: 33px; }
  .switch input { appearance: none; width: 32px; height: 16px; border-radius: 8px; background: #2d2e2e; border: 1px solid #525356; display: flex; align-items: center; }
  .switch input::before { content: ""; width: 14px; height: 14px; border-radius: 7px; background: #f2f3f7; }
  .switch input:checked::before { margin-left: auto; }
  .save { margin: 0 17px 0 16px; height: 25px; border: 0; border-radius: 3px; background: #ff6f5c; color: #fff; font-size: 10px; font-weight: 600; padding: 0 11px; }
  .hist { margin-right: 29px; }
  .gh { display: flex; margin: 0 21px; font: 600 10px/21px "Noto Sans", sans-serif; color: #fff; }
  .gh a { display: flex; align-items: center; gap: 3px; background: #1d232b; padding: 0 8px; }
  .gh .count { background: #0b0f16; padding: 0 7px; }
  .switcher { position: absolute; left: 513px; top: 40px; z-index: 3; display: flex; padding: 3px; border-radius: 4px; background: #525356; }
  .switcher button { height: 22px; padding: 0 10px; border: 0; border-radius: 3px; background: none; font-size: 10px; font-weight: 600; }
  .switcher .sel { background: #2a2b2b; color: #fff; }
  .split { flex: 1; min-height: 0; display: flex; }
  .runs { width: 257px; flex: none; border-right: 1px solid #525356; display: flex; flex-direction: column; }
  .rhead { display: flex; align-items: center; gap: 8px; padding: 19px 20px 0 20px; color: #f2f3f7; }
  .rhead h2 { font-size: 13px; margin-right: auto; line-height: 20px; }
  .rtools { display: flex; justify-content: space-between; align-items: center; padding: 12px 17px 9px 20px; font-size: 12px; }
  .rtools label { display: flex; align-items: center; gap: 8px; }
  .rtools input { appearance: none; width: 12px; height: 12px; border-radius: 2px; border: 1px solid #ff6f5c; }
  .rtools input:checked { background: #ff6f5c url("data:image/svg+xml,%3Csvg xmlns='http://www.w3.org/2000/svg' viewBox='0 0 12 12'%3E%3Cpath d='M2.500 6l2.500 2.500 4.500-5' fill='none' stroke='%23333' stroke-width='1.200'/%3E%3C/svg%3E"); }
  .rtools .outline { height: 27px; }
  .scroller { flex: 1; min-height: 0; display: flex; justify-content: space-between; }
  .runs ul { list-style: none; width: 203px; margin: 3px 0 0 19px; display: flex; flex-direction: column; }
  .runs li { flex: 1; border-left: 4px solid #82d3a9; }
  .runs li.bad { border-color: #ee8f94; }
  .runs li.chosen { background: #525356; background-clip: padding-box; }
  .runs li a { display: flex; align-items: center; gap: 12px; height: 100%; padding: 2px 12px 0 10px; }
  .rtext { flex: 1; display: grid; line-height: 15px; padding-bottom: 3px; }
  .rtext b { font-size: 12px; font-weight: 600; color: #fff; }
  .chosen small { color: #fff; }
  .rtext em { font-style: normal; color: #e8616d; }
  .retry { color: #ff6f5c; }
  .bar { width: 14px; background: #f1f1f1; display: flex; flex-direction: column; align-items: center; }
  .bar span { width: 12px; flex: 0 0 56%; background: #c1c1c1; }
  .upar, .dnar { height: 14px; display: grid; place-items: center; }
  .upar::before, .dnar::before { content: ""; border: 3px solid transparent; }
  .upar::before { border-bottom: 4px solid #a3a3a3; border-top: 0; }
  .dnar { margin-top: auto; }
  .dnar::before { border-top: 4px solid #505050; border-bottom: 0; }
  .saving { margin-top: 2px; height: 34px; border: 0; border-top: 1px solid #525356; background: #2a2b2b; display: flex; align-items: center; justify-content: space-between; padding: 0 10px; font-size: 10px; font-weight: 600; white-space: nowrap; }

  .canvas { position: relative; flex: 1; min-width: 0; overflow: hidden; background: repeating-linear-gradient(135deg, #2c2d2d 0 7px, #303233 7px 14px); display: flex; flex-direction: column; align-items: flex-end; }
  .edges { position: absolute; left: 0; top: 0; pointer-events: none; }
  .dhead { align-self: stretch; display: flex; align-items: center; gap: 10px; padding: 16px 26px 0 16px; }
  .dhead > div { margin-right: auto; }
  .dhead h2 { font-size: 13px; line-height: 20px; font-weight: 600; }
  .dhead p { font-size: 12px; }
  .dhead em { font-style: normal; color: #31a36a; }
  .node { position: absolute; width: 78px; display: flex; flex-direction: column; align-items: center; white-space: nowrap; color: #a9abb2; }
  .node strong { font-weight: 600; font-size: 12px; color: #fff; margin-top: 5px; }
  .node small { font-size: 10px; margin-top: 1px; }
  .tile { position: relative; width: 78px; height: 78px; border: 2px solid #31a36a; border-radius: 6px; background: #414244; display: grid; place-items: center; }
  .tile.trigger { border-radius: 27px 6px 6px 27px; }
  .ok { position: absolute; right: 4px; bottom: 4px; color: #31a36a; }
  .bolt { position: absolute; left: -28px; top: 28px; color: #ff6f5c; }
  .in { position: absolute; left: -5px; top: 31px; width: 6px; height: 13px; background: #c3c7d5; }
  .outs { position: absolute; right: -8px; top: 0; bottom: 0; display: flex; flex-direction: column; justify-content: center; gap: 13px; }
  .outs i { width: 13px; height: 13px; border-radius: 50%; background: #c3c7d5; }
  .count1 { position: absolute; transform: translate(-50%, -50%); font-size: 10px; color: #31a36a; white-space: nowrap; }
  .true { color: #c8cad2; }
  .rating { width: 208px; margin: 17px 26px 0 0; border: 1px solid #525356; border-radius: 4px; background: #414244; z-index: 1; color: #f2f3f7; }
  .rate { padding: 18px 13px 10px; border-bottom: 1px solid #525356; }
  .rrow { display: flex; align-items: center; gap: 12px; padding-right: 7px; color: #a9abb2; }
  .rrow span { margin-right: auto; color: #f2f3f7; font-size: 11px; }
  .addtag { margin-top: 14px; font-size: 10px; font-weight: 600; color: #a9abb2; }
  .hl { padding: 14px 13px 12px; }
  .hl h3 { font-size: 12px; }
  .hl p { margin-top: 14px; font-size: 10px; line-height: 14px; color: #c8cad2; }
  .hl a { color: #ff6f5c; }
  .zoomers { margin-top: auto; align-self: flex-start; display: flex; gap: 10px; padding: 0 0 13px 13px; }
  .zoomers .outline { width: 35px; height: 35px; padding: 0; }

  .assist { width: 273px; flex: none; border-left: 1px solid #525356; display: flex; flex-direction: column; background: #2d2e2e; }
  .ahead { height: 54px; flex: none; background: #414244; border-bottom: 1px solid #525356; display: flex; align-items: center; padding: 0 21px 0 19px; }
  .ahead b, .ask b { font-weight: 600; background: linear-gradient(90deg, #8f7df0, #b180e8 50%, #e0708f); background-clip: text; -webkit-background-clip: text; color: transparent; }
  .ahead b { font-size: 12px; margin: 0 5px 0 9px; }
  .ahead .bare { margin-left: auto; }
  .beta { font-size: 9px; line-height: 11px; font-weight: 600; color: #5e4bc0; background: #e7e2fb; border-radius: 6px; padding: 0 3px; }
  .chat { flex: 1; padding: 10px 5px 10px 13px; }
  .chat h2 { font-size: 13px; line-height: 20px; color: #fff; margin-bottom: 10px; display: flex; align-items: center; gap: 5px; }
  .chat p { font-size: 12px; line-height: 17px; margin-bottom: 7px; }
  .ask { display: inline-flex; align-items: center; gap: 4px; height: 15px; padding: 0 4px; border: 1px solid transparent; border-radius: 3px; vertical-align: middle; font-size: 8px; background: linear-gradient(#2d2e2e, #2d2e2e) padding-box, linear-gradient(90deg, #8f7df0, #e0708f) border-box; }
  .compose { height: 37px; flex: none; border-top: 1px solid #525356; display: flex; align-items: center; padding: 0 11px 0 10px; }
  .compose input { flex: 1; min-width: 0; border: 0; outline: 0; background: none; padding: 0; font-size: 10px; }
  .compose input::placeholder { color: #7f8186; opacity: 1; }
</style>
